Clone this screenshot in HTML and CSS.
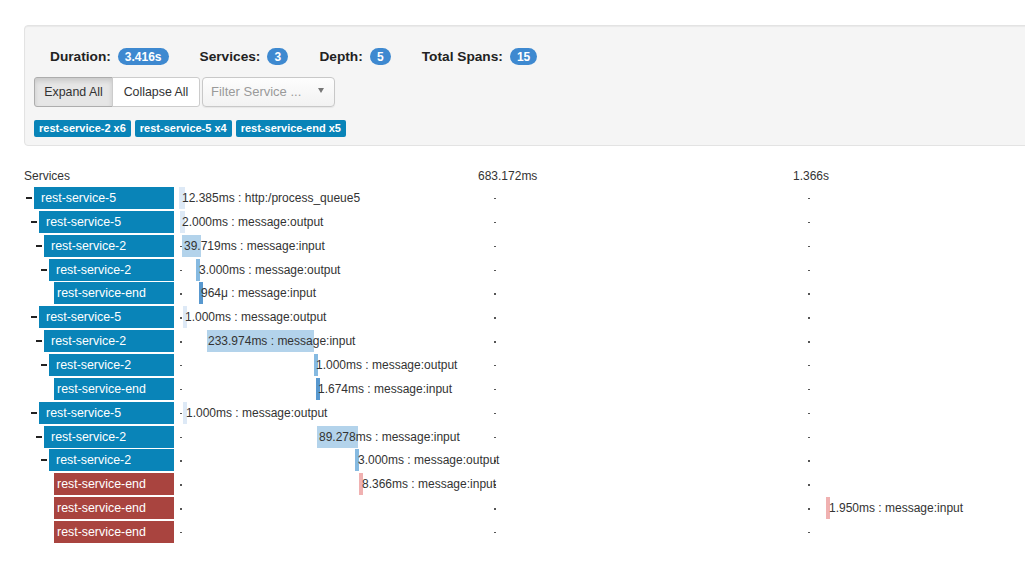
FILE: index.html
```html
<!DOCTYPE html>
<html>
<head>
<meta charset="utf-8">
<link rel="stylesheet" href="styles.css">
</head>
<body>
<div class="page">
  <div class="panel">
    <div class="stats">
      <div class="stat"><span class="stat-label">Duration:</span><span class="badge">3.416s</span></div>
      <div class="stat"><span class="stat-label">Services:</span><span class="badge">3</span></div>
      <div class="stat"><span class="stat-label">Depth:</span><span class="badge">5</span></div>
      <div class="stat"><span class="stat-label">Total Spans:</span><span class="badge">15</span></div>
    </div>
    <div class="controls">
      <div class="btn-group">
        <button class="btn btn-expand active">Expand All</button>
        <button class="btn btn-collapse">Collapse All</button>
      </div>
      <div class="select">
        <span class="placeholder">Filter Service ...</span>
        <span class="caret"></span>
      </div>
    </div>
    <div class="labels">
      <span class="label">rest-service-2 x6</span>
      <span class="label">rest-service-5 x4</span>
      <span class="label">rest-service-end x5</span>
    </div>
  </div>

  <div class="trace">
    <div class="trace-head">
      <div class="tree-head">Services</div>
      <div class="axis">
        <span class="axis-label al1">683.172ms</span>
        <span class="axis-label al2">1.366s</span>
      </div>
    </div>

    <div class="row">
      <div class="tree d0"><span class="toggle"></span><div class="svc">rest-service-5</div></div>
      <div class="lane"><i class="dot t0"></i><i class="dot t1"></i><i class="dot t2"></i>
        <span class="span c0" style="left:5px;width:6px"></span><span class="span-text" style="left:8px">12.385ms : http:/process_queue5</span></div>
    </div>
    <div class="row">
      <div class="tree d1"><span class="toggle"></span><div class="svc">rest-service-5</div></div>
      <div class="lane"><i class="dot t0"></i><i class="dot t1"></i><i class="dot t2"></i>
        <span class="span c0" style="left:6px;width:5px"></span><span class="span-text" style="left:8px">2.000ms : message:output</span></div>
    </div>
    <div class="row">
      <div class="tree d2"><span class="toggle"></span><div class="svc">rest-service-2</div></div>
      <div class="lane"><i class="dot t0"></i><i class="dot t1"></i><i class="dot t2"></i>
        <span class="span c2" style="left:8px;width:19px"></span><span class="span-text" style="left:10px">39.719ms : message:input</span></div>
    </div>
    <div class="row">
      <div class="tree d3"><span class="toggle"></span><div class="svc">rest-service-2</div></div>
      <div class="lane"><i class="dot t0"></i><i class="dot t1"></i><i class="dot t2"></i>
        <span class="span c3" style="left:22px;width:4px"></span><span class="span-text" style="left:25px">3.000ms : message:output</span></div>
    </div>
    <div class="row">
      <div class="tree d4"><span class="toggle none"></span><div class="svc">rest-service-end</div></div>
      <div class="lane"><i class="dot t0"></i><i class="dot t1"></i><i class="dot t2"></i>
        <span class="span c4" style="left:25px;width:4px"></span><span class="span-text" style="left:27px">964μ : message:input</span></div>
    </div>
    <div class="row">
      <div class="tree d1"><span class="toggle"></span><div class="svc">rest-service-5</div></div>
      <div class="lane"><i class="dot t0"></i><i class="dot t1"></i><i class="dot t2"></i>
        <span class="span c0" style="left:9px;width:4px"></span><span class="span-text" style="left:11px">1.000ms : message:output</span></div>
    </div>
    <div class="row">
      <div class="tree d2"><span class="toggle"></span><div class="svc">rest-service-2</div></div>
      <div class="lane"><i class="dot t0"></i><i class="dot t1"></i><i class="dot t2"></i>
        <span class="span c2" style="left:33px;width:107px"></span><span class="span-text" style="left:34px">233.974ms : message:input</span></div>
    </div>
    <div class="row">
      <div class="tree d3"><span class="toggle"></span><div class="svc">rest-service-2</div></div>
      <div class="lane"><i class="dot t0"></i><i class="dot t1"></i><i class="dot t2"></i>
        <span class="span c3" style="left:140px;width:4px"></span><span class="span-text" style="left:142px">1.000ms : message:output</span></div>
    </div>
    <div class="row">
      <div class="tree d4"><span class="toggle none"></span><div class="svc">rest-service-end</div></div>
      <div class="lane"><i class="dot t0"></i><i class="dot t1"></i><i class="dot t2"></i>
        <span class="span c4" style="left:142px;width:4px"></span><span class="span-text" style="left:144px">1.674ms : message:input</span></div>
    </div>
    <div class="row">
      <div class="tree d1"><span class="toggle"></span><div class="svc">rest-service-5</div></div>
      <div class="lane"><i class="dot t0"></i><i class="dot t1"></i><i class="dot t2"></i>
        <span class="span c0" style="left:9px;width:4px"></span><span class="span-text" style="left:12px">1.000ms : message:output</span></div>
    </div>
    <div class="row">
      <div class="tree d2"><span class="toggle"></span><div class="svc">rest-service-2</div></div>
      <div class="lane"><i class="dot t0"></i><i class="dot t1"></i><i class="dot t2"></i>
        <span class="span c2" style="left:143px;width:41px"></span><span class="span-text" style="left:145px">89.278ms : message:input</span></div>
    </div>
    <div class="row">
      <div class="tree d3"><span class="toggle"></span><div class="svc">rest-service-2</div></div>
      <div class="lane"><i class="dot t0"></i><i class="dot t1"></i><i class="dot t2"></i>
        <span class="span c3" style="left:181px;width:4px"></span><span class="span-text" style="left:184px">3.000ms : message:output</span></div>
    </div>
    <div class="row">
      <div class="tree d4"><span class="toggle none"></span><div class="svc error">rest-service-end</div></div>
      <div class="lane"><i class="dot t0"></i><i class="dot t1"></i><i class="dot t2"></i>
        <span class="span ce" style="left:185px;width:4px"></span><span class="span-text" style="left:188px">8.366ms : message:input</span></div>
    </div>
    <div class="row">
      <div class="tree d4"><span class="toggle none"></span><div class="svc error">rest-service-end</div></div>
      <div class="lane"><i class="dot t0"></i><i class="dot t1"></i><i class="dot t2"></i>
        <span class="span ce" style="left:652px;width:4px"></span><span class="span-text" style="left:655px">1.950ms : message:input</span></div>
    </div>
    <div class="row">
      <div class="tree d4"><span class="toggle none"></span><div class="svc error">rest-service-end</div></div>
      <div class="lane"><i class="dot t0"></i><i class="dot t1"></i><i class="dot t2"></i></div>
    </div>
  </div>
</div>
</body>
</html>
```

FILE: styles.css
```css
html, body {
  margin: 0;
  padding: 0;
  overflow: hidden;
  background: #fff;
}
body {
  font-family: "Liberation Sans", Arial, Helvetica, sans-serif;
  color: #333;
  font-size: 12px;
}
.page {
  padding: 25px 0 0 24px;
}

/* summary panel */
.panel {
  margin-right: -40px;
  background: #f5f5f5;
  border: 1px solid #e3e3e3;
  border-radius: 4px;
  box-shadow: inset 0 1px 1px rgba(0,0,0,0.05);
  padding: 20px 0 8px 9px;
  display: flex;
  flex-direction: column;
}
.stats {
  display: flex;
  align-items: center;
  height: 20px;
  padding-left: 16px;
  gap: 31px;
}
.stat {
  display: flex;
  align-items: center;
  gap: 7px;
}
.stat-label {
  font-weight: bold;
  font-size: 13.7px;
  color: #222;
}
.badge {
  display: inline-block;
  background: #3e89d0;
  color: #fff;
  font-weight: bold;
  font-size: 12px;
  line-height: 12px;
  padding: 3px 7px 2px;
  border-radius: 9px;
  min-width: 7px;
  text-align: center;
}
.controls {
  display: flex;
  margin-top: 11px;
  gap: 2px;
}
.btn-group {
  display: flex;
}
.btn {
  font-family: "Liberation Sans", Arial, Helvetica, sans-serif;
  font-size: 12.4px;
  color: #333;
  height: 30px;
  padding: 0;
  background: #fff;
  border: 1px solid #ccc;
  margin: 0;
  cursor: pointer;
  text-align: center;
}
.btn-expand {
  width: 79px;
  border-radius: 3px 0 0 3px;
}
.btn-collapse {
  width: 88px;
  border-radius: 0 3px 3px 0;
  margin-left: -1px;
}
.btn.active {
  background: #e6e6e6;
  border-color: #adadad;
  box-shadow: inset 0 3px 5px rgba(0,0,0,0.125);
}
.select {
  height: 28px;
  width: 113px;
  border: 1px solid #c8c8c8;
  border-radius: 4px;
  background: linear-gradient(#fdfdfd, #f2f2f2);
  box-shadow: 0 1px 1px rgba(0,0,0,0.06);
  display: flex;
  align-items: center;
  justify-content: space-between;
  padding: 0 10px 0 8px;
  box-sizing: content-box;
}
.placeholder {
  font-size: 13px;
  color: #9a9a9a;
  margin-top: -2px;
}
.caret {
  width: 0;
  height: 0;
  border-left: 3px solid transparent;
  border-right: 3px solid transparent;
  border-top: 5px solid #777;
  margin-bottom: 3px;
}
.labels {
  display: flex;
  gap: 4px;
  margin-top: 13px;
}
.label {
  background: #0984b8;
  color: #fff;
  font-weight: bold;
  font-size: 11px;
  line-height: 17px;
  height: 17px;
  padding: 0 5px;
  border-radius: 2px;
}

/* trace */
.trace {
  margin-top: 22px;
}
.trace-head {
  display: flex;
  height: 16px;
  line-height: 16px;
  margin-bottom: 2px;
}
.tree-head {
  width: 150px;
  flex: none;
}
.axis {
  position: relative;
  flex: 1;
}
.axis-label {
  position: absolute;
  top: 0;
  white-space: nowrap;
}
.al1 { left: 304px; }
.al2 { left: 619px; }

.row {
  display: flex;
  align-items: center;
  height: 23.86px;
}
.tree {
  width: 150px;
  flex: none;
  display: flex;
  align-items: center;
  box-sizing: border-box;
}
.d0 { padding-left: 0; }
.d1 { padding-left: 5px; }
.d2 { padding-left: 10px; }
.d3 { padding-left: 15px; }
.d4 { padding-left: 15px; }
.d4 .toggle { width: 15px; }
.toggle {
  width: 10px;
  height: 22px;
  flex: none;
  display: flex;
  align-items: center;
}
.toggle::before {
  content: "";
  display: block;
  width: 6px;
  height: 2px;
  background: #222;
  margin-left: 2px;
}
.toggle.none::before {
  display: none;
}
.svc {
  flex: 1;
  height: 22px;
  line-height: 22px;
  background: #0984b8;
  color: #fff;
  font-size: 12.4px;
  padding-left: 7px;
  white-space: nowrap;
  overflow: hidden;
}
.d4 .svc {
  padding-left: 3px;
}
.svc.error {
  background: #a9443f;
}
.lane {
  position: relative;
  flex: 1;
  height: 22px;
}
.dot {
  position: absolute;
  top: 11px;
  width: 2px;
  height: 1.5px;
  background: #555;
}
.t0 { left: 6px; }
.t1 { left: 320px; }
.t2 { left: 634px; }
.span {
  position: absolute;
  top: 0;
  height: 22px;
}
.c0 { background: #dde9f6; }
.c1 { background: #dde9f6; }
.c2 { background: #b3d3eb; }
.c3 { background: #86bae1; }
.c4 { background: #5898cf; }
.ce { background: #f0b1b1; }
.span-text {
  position: absolute;
  top: 0;
  line-height: 22px;
  font-size: 12px;
  color: #333;
  white-space: nowrap;
}
```
